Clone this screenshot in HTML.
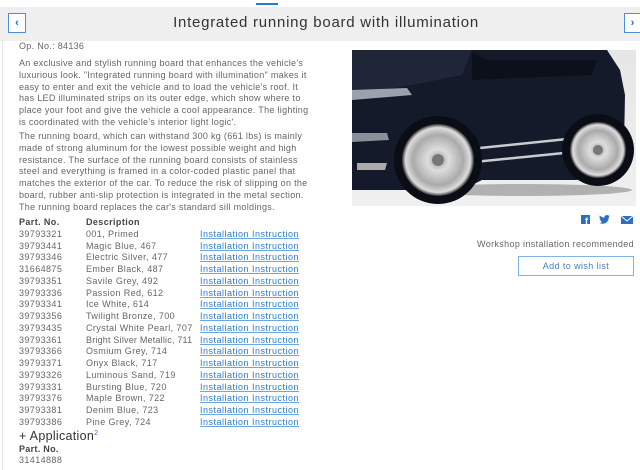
<!DOCTYPE html>
<html><head><meta charset="utf-8"><style>
*{margin:0;padding:0;box-sizing:border-box}
body{width:640px;height:470px;overflow:hidden;background:#fff;font-family:"Liberation Sans",sans-serif;color:#666;position:relative}
.top{position:absolute;left:256px;top:3px;width:22px;height:2px;background:#2a7bd0}
.hdr{position:absolute;left:0;top:7px;width:640px;height:34px;background:#efefef}
.hdr h1{position:absolute;left:0;width:652px;top:7px;text-align:center;font-weight:normal;font-size:15px;color:#333;letter-spacing:0.75px}
.btn{position:absolute;top:6px;width:18px;height:20px;border:1px solid #4a90d9;background:#fff;color:#1a6cc8;font-size:11px;font-weight:bold;text-align:center;line-height:18px}
.l{position:absolute;left:0;top:41px;width:3px;height:429px;border-right:1px solid #e6e6e6}
.t{position:absolute;left:19px;font-size:9px;line-height:11.75px;white-space:nowrap;letter-spacing:0.3px}
.t div{height:11.75px}
.tbl{position:absolute;left:19px;top:217px;font-size:9px;line-height:11.75px;white-space:nowrap;letter-spacing:0.4px}
.tbl .r{height:11.75px;position:relative}
.tbl span{position:absolute}
.c2{left:67px}.c3{left:181px;color:#2a7bd0;text-decoration:underline;text-decoration-color:#6aa8e4;letter-spacing:0.5px}
.hd{color:#444;font-weight:bold}
</style></head><body>
<div class="top"></div>
<div class="hdr"><div class="btn" style="left:8px">&#8249;</div><h1>Integrated running board with illumination</h1><div class="btn" style="left:624px;width:17px">&#8250;</div></div>
<div class="l"></div>
<div class="t" style="top:41px">Op. No.: 84136</div>
<div class="t" style="top:58px">
<div>An exclusive and stylish running board that enhances the vehicle's</div>
<div>luxurious look. "Integrated running board with illumination" makes it</div>
<div>easy to enter and exit the vehicle and to load the vehicle's roof. It</div>
<div>has LED illuminated strips on its outer edge, which show where to</div>
<div>place your foot and give the vehicle a cool appearance. The lighting</div>
<div>is coordinated with the vehicle's interior light logic'.</div>
</div>
<div class="t" style="top:131px">
<div>The running board, which can withstand 300 kg (661 lbs) is mainly</div>
<div>made of strong aluminum for the lowest possible weight and high</div>
<div>resistance. The surface of the running board consists of stainless</div>
<div>steel and everything is framed in a color-coded plastic panel that</div>
<div>matches the exterior of the car. To reduce the risk of slipping on the</div>
<div>board, rubber anti-slip protection is integrated in the metal section.</div>
<div>The running board replaces the car's standard sill moldings.</div>
</div>
<div class="tbl">
<div class="r hd"><span>Part. No.</span><span class="c2">Description</span></div>
<div class="r"><span>39793321</span><span class="c2">001, Primed</span><span class="c3">Installation Instruction</span></div>
<div class="r"><span>39793441</span><span class="c2">Magic Blue, 467</span><span class="c3">Installation Instruction</span></div>
<div class="r"><span>39793346</span><span class="c2">Electric Silver, 477</span><span class="c3">Installation Instruction</span></div>
<div class="r"><span>31664875</span><span class="c2">Ember Black, 487</span><span class="c3">Installation Instruction</span></div>
<div class="r"><span>39793351</span><span class="c2">Savile Grey, 492</span><span class="c3">Installation Instruction</span></div>
<div class="r"><span>39793336</span><span class="c2">Passion Red, 612</span><span class="c3">Installation Instruction</span></div>
<div class="r"><span>39793341</span><span class="c2">Ice White, 614</span><span class="c3">Installation Instruction</span></div>
<div class="r"><span>39793356</span><span class="c2">Twilight Bronze, 700</span><span class="c3">Installation Instruction</span></div>
<div class="r"><span>39793435</span><span class="c2">Crystal White Pearl, 707</span><span class="c3">Installation Instruction</span></div>
<div class="r"><span>39793361</span><span class="c2" style="letter-spacing:0.2px">Bright Silver Metallic, 711</span><span class="c3">Installation Instruction</span></div>
<div class="r"><span>39793366</span><span class="c2">Osmium Grey, 714</span><span class="c3">Installation Instruction</span></div>
<div class="r"><span>39793371</span><span class="c2">Onyx Black, 717</span><span class="c3">Installation Instruction</span></div>
<div class="r"><span>39793326</span><span class="c2">Luminous Sand, 719</span><span class="c3">Installation Instruction</span></div>
<div class="r"><span>39793331</span><span class="c2">Bursting Blue, 720</span><span class="c3">Installation Instruction</span></div>
<div class="r"><span>39793376</span><span class="c2">Maple Brown, 722</span><span class="c3">Installation Instruction</span></div>
<div class="r"><span>39793381</span><span class="c2">Denim Blue, 723</span><span class="c3">Installation Instruction</span></div>
<div class="r"><span>39793386</span><span class="c2">Pine Grey, 724</span><span class="c3">Installation Instruction</span></div>
</div>
<div style="position:absolute;left:19px;top:429px;font-size:12.5px;color:#333;letter-spacing:0.3px">+ Application<sup style="font-size:7px;color:#2a7bd0">2</sup></div>
<div style="position:absolute;left:19px;top:444px;font-size:9px;color:#444;font-weight:bold;letter-spacing:0.3px">Part. No.</div>
<div style="position:absolute;left:19px;top:455px;font-size:9px;letter-spacing:0.4px">31414888</div>

<svg style="position:absolute;left:352px;top:50px" width="284" height="156" viewBox="0 0 284 156">
<defs>
<linearGradient id="bg" x1="0" y1="0" x2="0" y2="1"><stop offset="0" stop-color="#e6e6e6"/><stop offset="1" stop-color="#f0f0f0"/></linearGradient>
<radialGradient id="wh"><stop offset="0" stop-color="#999"/><stop offset="0.3" stop-color="#ddd"/><stop offset="0.7" stop-color="#aaa"/><stop offset="0.9" stop-color="#ddd"/><stop offset="1" stop-color="#333"/></radialGradient>
</defs>
<rect width="284" height="156" fill="url(#bg)"/>
<path d="M0 0H255L268 20L273 45L272 95L255 115L225 130H130L110 140H0Z" fill="#141a2a"/>
<path d="M0 0H120L110 25L60 35L0 45Z" fill="#1e2638"/>
<path d="M120 2L135 10L245 10L240 25L120 30Z" fill="#0c101a"/>
<path d="M0 40L55 38L60 45L0 50Z" fill="#9aa2ad"/>
<path d="M0 83L35 83L37 90L0 92Z" fill="#8a9099"/>
<path d="M5 113L35 113L33 120L5 120Z" fill="#aaa"/>
<path d="M128 98L225 88" stroke="#c8ccd2" stroke-width="2.5"/>
<path d="M122 112L222 102" stroke="#c8ccd2" stroke-width="2.5"/>
<ellipse cx="170" cy="140" rx="110" ry="6" fill="#555" opacity="0.4"/>
<circle cx="86" cy="110" r="44" fill="#0a0d15"/>
<circle cx="86" cy="110" r="36" fill="url(#wh)"/>
<circle cx="86" cy="110" r="6" fill="#777"/>
<circle cx="246" cy="100" r="36" fill="#0a0d15"/>
<circle cx="246" cy="100" r="28" fill="url(#wh)"/>
<circle cx="246" cy="100" r="5" fill="#777"/>
</svg>

<svg style="position:absolute;left:581px;top:215px" width="9" height="9"><rect width="9" height="9" fill="#2a6fc0"/><text x="4" y="9" font-size="9" font-weight="bold" fill="#fff" font-family="Liberation Sans">f</text></svg>
<svg style="position:absolute;left:599px;top:215px" width="11" height="9" viewBox="0 0 24 20"><path d="M24 2.4a10 10 0 01-2.8.8A5 5 0 0023.3.4a10 10 0 01-3.1 1.2A5 5 0 0011.8 6 14 14 0 011.7.9a5 5 0 001.5 6.6A5 5 0 01.9 6.9a5 5 0 004 4.9 5 5 0 01-2.2.1 5 5 0 004.6 3.4A10 10 0 010 17.3 14 14 0 007.5 19.5c9 0 14-7.5 14-14v-.6A10 10 0 0024 2.4z" fill="#2a6fc0"/></svg>
<svg style="position:absolute;left:621px;top:216px" width="12" height="8"><rect width="12" height="8" fill="#2a6fc0"/><path d="M0 0L6 5L12 0" stroke="#fff" fill="none"/></svg>
<div style="position:absolute;right:6px;top:239px;font-size:9px;color:#666;letter-spacing:0.35px">Workshop installation recommended</div>
<div style="position:absolute;left:518px;top:256px;width:116px;height:20px;border:1px solid #7fb2e6;text-align:center;font-size:9px;line-height:18px;color:#4a7fb8;letter-spacing:0.4px">Add to wish list</div>
</body></html>
